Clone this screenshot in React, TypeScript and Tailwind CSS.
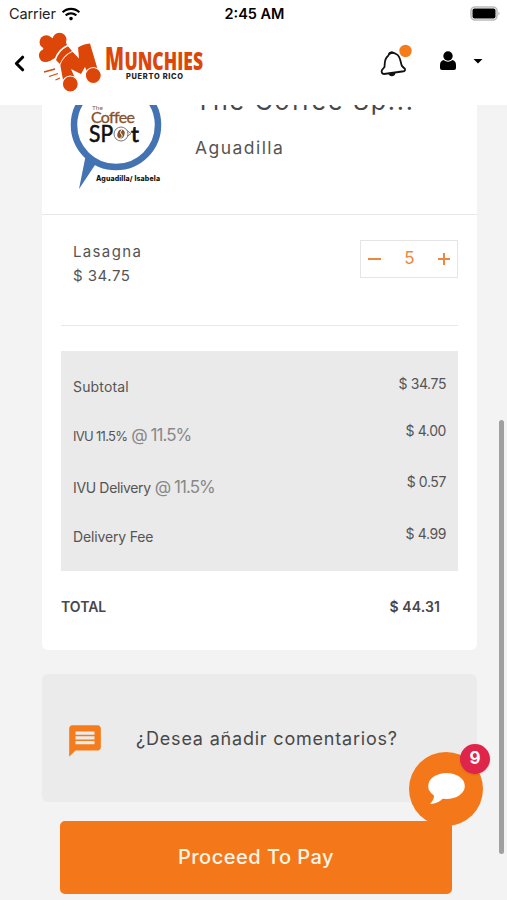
import { ChevronLeft } from "lucide-react";
import { FaWifi } from "react-icons/fa";
import { MdMessage } from "react-icons/md";

const charges = [
  { label: "Subtotal", rate: "", amount: "$ 34.75", row: "h-[47px]", pad: "pb-[4px]", track: "tracking-[0.15px]" },
  { label: "IVU 11.5%", rate: "@ 11.5%", amount: "$ 4.00", row: "h-[53px]", pad: "pb-[11px]", track: "tracking-[-0.7px]" },
  { label: "IVU Delivery", rate: "@ 11.5%", amount: "$ 0.57", row: "h-[51px]", pad: "pb-[12px]", track: "tracking-[-0.35px]" },
  { label: "Delivery Fee", rate: "", amount: "$ 4.99", row: "h-[45px]", pad: "pb-[5px]", track: "tracking-[-0.15px]" },
];

function StatusBar() {
  return (
    <div className="grid h-7 grid-cols-3 items-center pl-[9px] pr-[7px] text-[14.5px] text-[#222]">
      <div className="flex items-center gap-[6px]">
        <span className="tracking-[-0.1px]">Carrier</span>
        <FaWifi size={18} className="text-black" />
      </div>
      <div className="text-center font-semibold tracking-[0px] text-black">2:45 AM</div>
      <svg className="justify-self-end" width="31" height="16" viewBox="0 0 31 16">
        <rect x="2" y="1" width="26" height="13" rx="4" fill="#fff" stroke="#bbb" strokeWidth="1.6" />
        <rect x="3.500" y="2.500" width="23" height="10" rx="2" fill="#000" />
        <path d="M29.500 5.500Q31.500 7.500 29.500 9.500Z" fill="#aaa" />
      </svg>
    </div>
  );
}

function Logo() {
  return (
    <svg width="168" height="62" viewBox="0 0 168 62" fill="#dc4709">
      {/* chef hat */}
      <circle cx="8.3" cy="10" r="6.8" />
      <circle cx="21.500" cy="7.800" r="7" />
      <circle cx="7.500" cy="23.500" r="6.600" />
      <path d="M6 12L14 6L27 8L29 13Q20 17 17 26L12 29L4 24Z" />
      <path d="M18 28Q21 18.500 30 14.200L34 19Q25 23.500 21.800 32Z" />
      {/* letter body */}
      <path d="M22.300 33Q25.500 24 34.500 19.800L41 26.500L40 15.500Q45 12 52 11.500L60 38.500L50 42L47 35L43 42L33 37L36.500 45L25 48Z" />
      <circle cx="32.300" cy="52" r="8" stroke="#fff" strokeWidth="1.2" />
      <circle cx="55.300" cy="43.500" r="8" stroke="#fff" strokeWidth="1.2" />
      <path d="M6 40L17 37M11 44.500L20 41.500M17.500 48L22 46" stroke="#dc4709" strokeWidth="1.3" />
      <g fontFamily="Open Sans, sans-serif" fontWeight="800">
        <text x="67" y="38" fontSize="31" textLength="19" lengthAdjust="spacingAndGlyphs">M</text>
        <text x="86.500" y="38" fontSize="25" textLength="78.500" lengthAdjust="spacingAndGlyphs">UNCHIES</text>
      </g>
      <text x="88" y="47" fontSize="7.4" fontWeight="800" fontFamily="Inter, sans-serif" textLength="57" fill="#222">PUERTO RICO</text>
    </svg>
  );
}

function BellIcon() {
  return (
    <svg width="34" height="36" viewBox="0 -1 34 36" fill="none">
      <g stroke="#111" strokeWidth="1.8" strokeLinejoin="round">
        <path d="M10 12C11 9 15 8 18 10C23 12 22 18 24 22L27 25C27.500 27 26 27.500 24 27.500L6 30C4 30 3 28 4 26L6.500 23C7 19 6 15 10 12Z" />
        <path d="M11 10.500C11 8 15 7.500 15.500 9.500" />
        <path d="M11.500 30C12.500 32 16 31.500 16.500 29.500Z" fill="#111" />
      </g>
      <circle cx="27.500" cy="7" r="6.200" fill="#f57c1c" />
    </svg>
  );
}

function AppHeader() {
  return (
    <header className="relative z-10 h-[105px] shrink-0 bg-white">
      <StatusBar />
      <div className="flex h-[77px] items-start pr-[24px]">
        <ChevronLeft size={25} strokeWidth={3} className="ml-[7px] mt-[23px] text-black" />
        <div className="ml-[6px] mt-[4px]">
          <Logo />
        </div>
        <div className="ml-auto flex items-center gap-[28px] pt-[15px]">
          <BellIcon />
          <div className="flex items-center gap-[17px]">
            <svg width="16" height="20" viewBox="0 0 16 20">
              <circle cx="8" cy="5" r="4.700" />
              <path d="M3.500 9Q8 12.500 12.500 9Q16 10 16 14V17Q16 19 14 19H2Q0 19 0 17V14Q0 10 3.500 9Z" />
            </svg>
            <svg width="10" height="6" viewBox="0 0 10 6">
              <path d="M0.500 1H9.500L5 5.500Z" />
            </svg>
          </div>
        </div>
      </div>
    </header>
  );
}

function RestaurantLogo() {
  return (
    <svg width="94" height="112" viewBox="0 0 94 112">
      <path d="M19 66L10 111L34 75Z" fill="#4473b3" />
      <circle cx="47" cy="47" r="42" fill="#fff" stroke="#4473b3" strokeWidth="6.500" />
      <g fontFamily="Lato, sans-serif">
        <text x="23" y="32" fontSize="6.5" fill="#80604a">The</text>
        <text x="22" y="44.500" fontSize="16" fill="#87512a" stroke="#87512a" strokeWidth="0.3" textLength="44">Coffee</text>
        <text x="20" y="63.500" fontSize="23" fill="#111" stroke="#111" strokeWidth="0.6" textLength="24" lengthAdjust="spacingAndGlyphs">SP</text>
        <text x="62" y="63.500" fontSize="22" fill="#111" stroke="#111" strokeWidth="0.8">t</text>
      </g>
      <circle cx="52" cy="56" r="7" fill="none" stroke="#777" strokeWidth="1" />
      <ellipse cx="52" cy="56" rx="3.500" ry="4.500" fill="#87512a" transform="rotate(20 52 56)" />
      <path d="M53 51.500Q50 55.500 53 56.500Q54 58.500 51 60.500" fill="none" stroke="#fff" />
      <path d="M58 52.500L62 55.500L58 58.500" fill="none" stroke="#777" />
      <text x="27" y="103" fontSize="7" fontWeight="800" fontFamily="Inter, sans-serif" fill="#17130a" textLength="64">Aguadilla/ Isabela</text>
    </svg>
  );
}

function Charges() {
  return (
    <div className="mt-[25px] h-[220px] bg-[#eaeaea] px-3 pt-[11px] text-[#555]">
      {charges.map((c) => (
        <div key={c.label} className={`flex items-center justify-between ${c.row}`}>
          <div className="whitespace-nowrap">
            <span className={`${c.label === "IVU 11.5%" ? "text-[13px]" : "text-[14px]"} ${c.track}`}>{c.label}</span>
            {c.rate && <span className="ml-[4px] text-[17px] tracking-[-0.95px] text-[#888]">{c.rate}</span>}
          </div>
          <div className={`text-[14px] tracking-[-0.4px] ${c.pad}`}>{c.amount}</div>
        </div>
      ))}
    </div>
  );
}

function OrderCard() {
  return (
    <section className="-mt-[27px] h-[572px] overflow-hidden rounded-b-[6px] bg-white">
      <div className="flex h-[137px] border-b border-[#e8e8e8] pl-[27px]">
        <RestaurantLogo />
        <div className="ml-[32px] whitespace-nowrap text-[#484848]">
          <h2 className="mt-[4px] text-[25px] leading-[38px] tracking-[1.75px]">The Coffee Sp...</h2>
          <p className="mt-[16px] text-[17.5px] leading-6 tracking-[1.45px] text-[#555]">Aguadilla</p>
        </div>
      </div>
      <div className="px-[19px]">
        <div className="flex h-[111px] justify-between border-b border-[#e8e8e8] pl-3 pt-[25px] text-[#555]">
          <div className="text-[15px] leading-6">
            <div className="tracking-[1.35px]">Lasagna</div>
            <div className="tracking-[0.5px]">$ 34.75</div>
          </div>
          <div className="flex h-[38px] w-[98px] items-center justify-between border border-[#e5e5e5] px-[7px] text-[#ee873b]">
            <span className="h-[2px] w-[13px] bg-[#ee873b]" />
            <span className="text-[17px]">5</span>
            <svg width="12" height="12" viewBox="0 0 12 12" stroke="#ee873b" strokeWidth="2">
              <path d="M6 0V12M0 6H12" />
            </svg>
          </div>
        </div>
        <Charges />
        <div className="flex justify-between pr-[18px] pt-[24px] text-[14px] font-semibold leading-6 text-[#484848]">
          <span>TOTAL</span>
          <span className="tracking-[0.1px]">$ 44.31</span>
        </div>
      </div>
    </section>
  );
}

export default function App() {
  return (
    <div className="relative flex h-[900px] w-[507px] flex-col overflow-hidden bg-[#f3f3f3] font-[Inter,sans-serif]">
      <AppHeader />
      <main className="flex-1 overflow-hidden pl-[42px] pr-[30px]">
        <OrderCard />
        <section className="mt-6 flex h-[128px] items-center rounded-[6px] bg-[#ebebeb] pl-[24px]">
          <MdMessage size={38} className="mt-[6px] text-[#f57c1c]" />
          <span className="ml-[32px] whitespace-nowrap text-[18px] tracking-[0.8px] text-[#484848]">
            ¿Desea añadir comentarios?
          </span>
        </section>
        <button className="ml-[18px] mt-[19px] h-[73px] w-[392px] rounded-[5px] bg-[#f4781a] pb-[2px] text-[20px] font-medium tracking-[0.5px] text-[#fff5e6]">
          Proceed To Pay
        </button>
      </main>

      {/* chat launcher floats over the page */}
      <div className="absolute left-[409px] top-[752px] z-20 flex h-[74px] w-[74px] items-center justify-center rounded-full bg-[#f4781a]">
        <svg width="38" height="33" viewBox="0 0 38 33" fill="#fff">
          <ellipse cx="19.500" cy="13" rx="18.300" ry="13" />
          <path d="M7 20Q8 26 3 31Q12 31 17 24Z" />
        </svg>
        <span className="absolute -right-[7px] -top-[8px] flex h-[30px] w-[30px] items-center justify-center rounded-full bg-[#df2549] text-[17px] font-bold text-white shadow">
          9
        </span>
      </div>
      <div className="absolute left-[499px] top-[420px] z-20 h-[434px] w-[5px] rounded-full bg-[#a0a0a0]" />
    </div>
  );
}
